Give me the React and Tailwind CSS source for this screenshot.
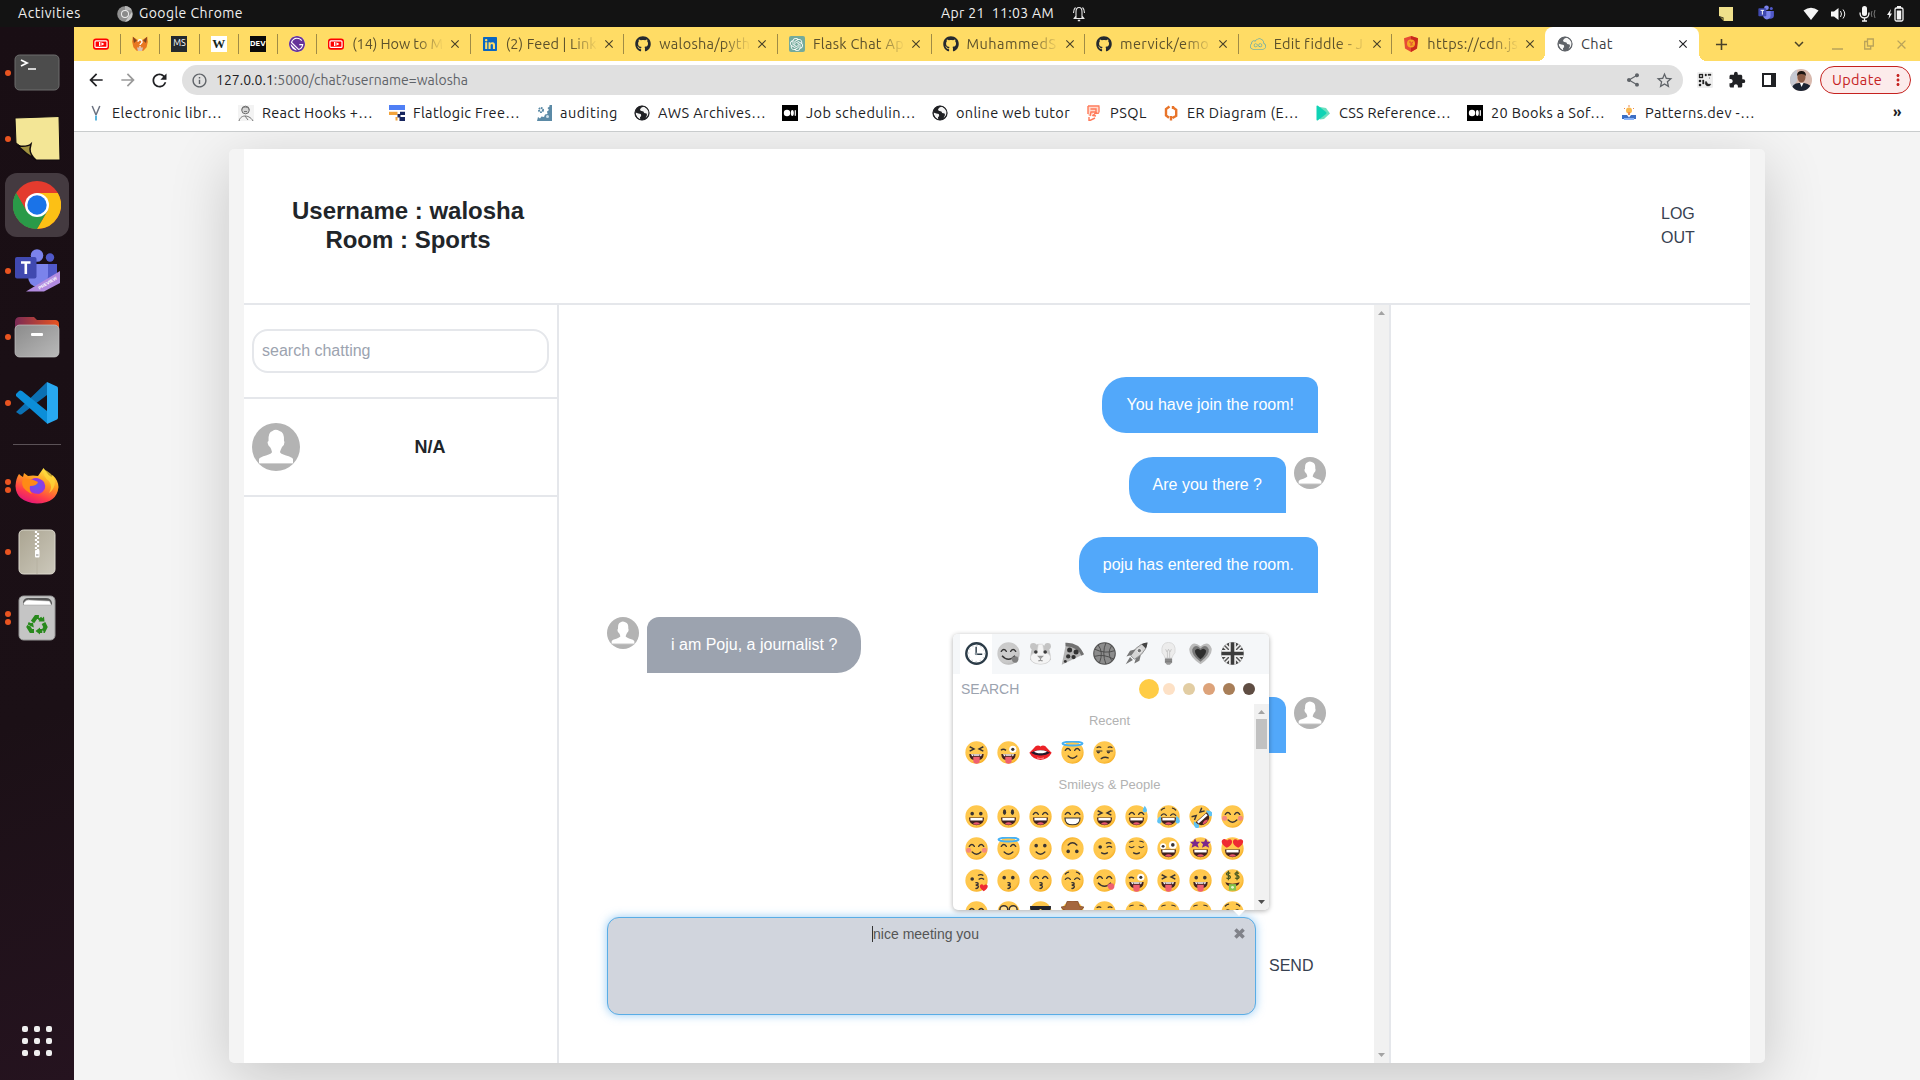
import React, { useLayoutEffect, useRef } from "react";
import { FaGithub, FaLinkedin } from "react-icons/fa";
import { SiOpenai, SiGatsby, SiJsfiddle } from "react-icons/si";
import {
  MdArrowBack, MdArrowForward, MdRefresh, MdInfoOutline, MdShare, MdStarOutline, MdExtension,
  MdClose, MdAdd, MdExpandMore, MdMoreVert,
} from "react-icons/md";

/* Single line of text spaced out to fill a given width. */
function Fit({ w, className = "", children }) {
  const outer = useRef(null);
  useLayoutEffect(() => {
    const el = outer.current.firstChild;
    el.style.letterSpacing = "0px";
    const natural = el.getBoundingClientRect().width;
    const n = el.textContent.length;
    el.style.letterSpacing = (w - natural) / n + "px";
  }, [w, children]);
  return (
    <span ref={outer} className={"block shrink-0 whitespace-pre " + className} style={{ width: w }}>
      <span className="inline-block">{children}</span>
    </span>
  );
}

/* ---------- small icons ---------- */

const Globe = ({ color = "#202124", size = 16 }) => (
  <svg width={size} height={size} viewBox="0 0 16 16">
    <circle cx="8" cy="8" r="7.2" fill={color} />
    <path d="M10 1.600 7.500 2.600 6 4.200 6.600 5.800l2.800.6.8 1.600 2.400.4.4 1.600-1.400 3.200 2.400-2.200 1.200-3-.4-3L13 3.600z" fill="#fff" opacity=".95" />
    <path d="M1.400 7.400 4.400 8.600l2.400.4.400 2-1.200 1.200.200 2.200-2.600-1.600-1.600-2.800z" fill="#fff" opacity=".95" />
    <circle cx="8" cy="8" r="7" fill="none" stroke={color} strokeWidth="1.200" />
  </svg>
);

const YouTube = () => (
  <svg width="16" height="16" viewBox="0 0 16 16">
    <rect x="0" y="2.400" width="16" height="11.400" rx="3" fill="#f00" />
    <rect x="2" y="4.800" width="12" height="6.600" rx="1" fill="none" stroke="#fff" strokeWidth="1.200" />
    <path d="M6 6h1.400v4H6zM8.400 6.200l3 1.800-3 1.800z" fill="#fff" />
  </svg>
);

const Fox = () => (
  <svg width="16" height="16" viewBox="0 0 16 16">
    <path d="M.8.8l5.400 3.400h3.600L15.200.8l.6 5-1.200 5.400-3.200 3.600H4.600l-3.200-3.600L.2 5.800z" fill="#e87722" />
    <path d="M.8.8l4 3.800L2 7zM15.200.8l-4 3.800L14 7z" fill="#7d4520" />
    <path d="M5 11.500h6L10 15H6z" fill="#d7c1b3" />
    <path d="M6 5.800a2 2 0 1 1 3 1.700c-.7.4-.9.800-.9 1.600M8 10.200v1.400" fill="none" stroke="#fff" strokeWidth="1.400" />
  </svg>
);

const LetterTile = ({ text, cls }) => (
  <span className={"flex h-4 w-4 items-center justify-center overflow-hidden " + cls}>{text}</span>
);

const Shield = () => (
  <svg width="16" height="16" viewBox="0 0 16 16">
    <path d="M8 0l7 2.300-1 10.200L8 16l-6-3.500L1 2.300z" fill="#e64b35" />
    <path d="M8 0l7 2.300-1 10.200L8 16z" fill="#c9291c" />
    <circle cx="8" cy="7.600" r="4" fill="#f5a623" />
    <path d="M6 6h2v4M10 5.500 8.500 8 10 9.500" fill="none" stroke="#e64b35" />
  </svg>
);

const MediumTile = () => (
  <svg width="16" height="16" viewBox="0 0 16 16">
    <rect width="16" height="16" fill="#000" />
    <circle cx="5" cy="8" r="3.200" fill="#fff" />
    <ellipse cx="10.300" cy="8" rx="1.500" ry="3" fill="#fff" />
    <rect x="12.700" y="5.200" width="1.200" height="5.600" fill="#fff" />
  </svg>
);

const BookmarkIcon = ({ kind }) => {
  if (kind === "globe") return <Globe />;
  if (kind === "medium") return <MediumTile />;
  return (
    <svg width="16" height="16" viewBox="0 0 16 16">
      {kind === "y" && (
        <>
          <path d="M4.200 1 8 10M11.800 1 8 10" fill="none" stroke="#6b7280" strokeWidth="1.500" />
          <path d="M8 10.500v5" stroke="#5ab4dc" strokeWidth="2" />
        </>
      )}
      {kind === "man" && (
        <>
          <rect width="16" height="16" fill="#f3f3f3" />
          <circle cx="7.500" cy="5" r="3.800" fill="#d5d5d5" stroke="#6d6d6d" />
          <path d="M4 4.500C4 1.500 11 1 11 4.800M6 6.500h3M1 16c1-4 4-5 6-5s6 1 8 5M7 11l3 4" fill="none" stroke="#777" />
        </>
      )}
      {kind === "flat" && (
        <>
          <path d="M0 0h16v5H0z" fill="#4f7ff5" />
          <path d="M0 6.800h8.500v3.200H0zM6.500 12h2v3.500h-2z" fill="#f2a33a" />
          <path d="M11 6.800h5v3.200h-5zM8.500 9h3v3H16v4h-5.500v-3.500h-2z" fill="#17255f" />
        </>
      )}
      {kind === "gear" && (
        <>
          <path d="M16 0v16H1l1-4 2 1.500 1.500-2 2.500.5 1-2.500 2.500-.5-.5-2.500 2-1.500-1.500-2 2-1.500V0z" fill="#5b8aa6" />
          <circle cx="5" cy="5" r="2" fill="none" stroke="#5b8aa6" strokeWidth="2" strokeDasharray="1.500 .6" />
          <circle cx="11.500" cy="11.500" r="1.500" fill="#cfe0ea" />
        </>
      )}
      {kind === "psql" && (
        <>
          <path d="M2 1.500h10.500v6H7v3H2z" fill="#ffd9cd" />
          <path d="M2 1h11.500M13 1.500v6M13 8 9 8.500l-2 2 3 .5M4.500 4h5.500v3H5l-1 4M2 1v8M3 12v4l6-3" fill="none" stroke="#ff7a59" strokeWidth="1.400" />
        </>
      )}
      {kind === "er" && (
        <path d="M6.500 1.500 3 4v6.500l3 2.200M10 2.500 13.200 4.800v6L9.500 13M8 11v4.500M10 1v3" fill="none" stroke="#e8742a" strokeWidth="2.400" />
      )}
      {kind === "css" && (
        <>
          <path d="M5 2v12.500l4-.5 6-5.500L11 3z" fill="#3ad6a9" opacity=".75" />
          <path d="M1.500 1.500q0-1.500 1.500-.7l8 6.200q1.200 1 0 2l-8 6.200q-1.500.8-1.500-.7z" fill="#0fd3b5" />
        </>
      )}
      {kind === "lamp" && (
        <>
          <circle cx="8" cy="5.500" r="3" fill="#f8b84e" />
          <path d="M8 0v2M3 3l1 1M13 3l-1 1" stroke="#ef8b4a" />
          <path d="M7 7h2v3H7z" fill="#ef8b4a" />
          <path d="M1 10l5 0 2 2.500 2-2.500 5 0v4H1z" fill="#3c6fc4" />
          <path d="M3 14h10" stroke="#8ab4f8" strokeWidth="2" />
        </>
      )}
    </svg>
  );
};

/* ---------- dock icons ---------- */

const ChromeLogo = ({ size }) => (
  <svg width={size} height={size} viewBox="0 0 48 48">
    <circle cx="24" cy="24" r="24" fill="#e33b2e" />
    <path d="M24 12H44.800A24 24 0 0 1 24 48L34.400 30z" fill="#fcc015" />
    <path d="M24 48A24 24 0 0 1 3.200 12L13.600 30 24 36 34.400 30z" fill="#2a9a48" />
    <path d="M3.200 12h41.600H24L13.600 30z" fill="#e33b2e" />
    <path d="M3.200 12 13.600 30l4 4L24 36 24 48A24 24 0 0 1 3.200 12z" fill="#2a9a48" />
    <circle cx="24" cy="24" r="12" fill="#fff" />
    <circle cx="24" cy="24" r="9.700" fill="#1a73e8" />
  </svg>
);

const Terminal = () => (
  <svg width="46" height="38" viewBox="0 0 46 38">
    <rect x="1" y="1" width="44" height="35" rx="4.500" fill="#4c4c4c" stroke="#6d6d6d" />
    <path d="M7 6l6 3-6 3" fill="none" stroke="#fff" strokeWidth="1.800" />
    <path d="M14 15h8" stroke="#fff" strokeWidth="1.500" />
  </svg>
);

const StickyNote = ({ size = 48 }) => (
  <svg width={size} height={size} viewBox="0 0 48 48">
    <path d="M2 3 46 1.500 47 45H23Q14 38 10 33L3 28z" fill="#f3e696" stroke="#110b0e" />
    <path d="M5 31q10 1 13-2l-1 5q0 6 6 11-10-6-18-14z" fill="#a1923f" stroke="#110b0e" strokeWidth="1.500" />
  </svg>
);

const Teams = ({ size = 46, preview }) => (
  <svg width={size} height={size} viewBox="0 0 46 46">
    <circle cx="23" cy="7.500" r="6.300" fill="#7b83eb" />
    <circle cx="36" cy="9.500" r="4.200" fill="#5059c9" />
    <path d="M30 16h13v12q0 9-8 9h-5z" fill="#5059c9" />
    <path d="M14 16h20v12q0 10-10 11-10-1-10-11z" fill="#7b83eb" />
    <rect x="1" y="9" width="21.500" height="21.500" rx="2" fill="#4049b0" />
    <path d="M7 14.500h9.500M11.800 14.500V26" stroke="#fff" strokeWidth="2.600" />
    {preview && (
      <>
        <path d="M12 43.500 46 23v12L30 43.500z" fill="#b18be0" />
        <text x="25.500" y="41.800" fontSize="4.500" fontWeight="700" fill="#fff" fontFamily="Liberation Sans, sans-serif" transform="rotate(-31 25.500 41.800)">PREVIEW</text>
      </>
    )}
  </svg>
);

const Folder = () => (
  <svg width="46" height="42" viewBox="0 0 46 42">
    <defs>
      <linearGradient id="fold" x1="0" x2="1"><stop offset="0" stopColor="#7a2a55" /><stop offset="1" stopColor="#e9541f" /></linearGradient>
      <linearGradient id="foldf" x1="0" x2="1" y2="1"><stop offset="0" stopColor="#8b8b8b" /><stop offset="1" stopColor="#b9b9b9" /></linearGradient>
    </defs>
    <path d="M1 6q0-5 5-5h14l3 3h18q4 0 4 4v14H1z" fill="url(#fold)" />
    <rect x="1" y="9" width="44" height="32" rx="4.500" fill="url(#foldf)" stroke="#c4c4c4" strokeWidth=".7" />
    <rect x="17" y="17" width="12" height="3" rx="1" fill="#fff" />
  </svg>
);

const VSCode = () => (
  <svg width="44" height="44" viewBox="0 0 44 44">
    <path d="M1 31 32 1v13L7 33q-2 1-3 0l-3-2z" fill="#0b70b3" />
    <path d="M1 13l3-3q1-1 3 0l25 20v12.500L1 15z" fill="#0c8ed8" />
    <path d="M32 1l10 4.500q1 .5 1 2v29q0 1.500-1 2L32 43z" fill="#28a8f0" />
  </svg>
);

const Firefox = () => (
  <svg width="44" height="36" viewBox="0 0 44 36">
    <defs>
      <linearGradient id="ffx" x1=".8" y1="0" x2=".3" y2="1">
        <stop offset="0" stopColor="#fff44f" /><stop offset=".4" stopColor="#ff9a1f" /><stop offset=".75" stopColor="#ff3b4b" /><stop offset="1" stopColor="#e0147c" />
      </linearGradient>
      <radialGradient id="ffp"><stop offset="0" stopColor="#5b5bf0" /><stop offset="1" stopColor="#9a35dd" /></radialGradient>
    </defs>
    <path d="M4 6q2 2 4 3l1-4 4 3q5-1 10 0L28.500 0l5 7 3 2 1-2Q43 12 43.500 19 42 35 22 35.500 1 34 0.500 18 1 10 4 6z" fill="url(#ffx)" />
    <path d="M13 14q8-8 16 0 4 8-5 12-10 0-11-7z" fill="url(#ffp)" />
    <path d="M8 11q8-1 15 3-1 4-8 4-1 4 2 8Q4 20 8 11z" fill="#ff8a16" />
    <path d="M28 1q0 8 6 12 4 6 0 12 6-4 6-12-2-8-12-12z" fill="#ffd83a" opacity=".75" />
  </svg>
);

const Archive = () => (
  <svg width="38" height="46" viewBox="0 0 38 46">
    <defs><linearGradient id="arc" x1="0" x2="1" y2="1"><stop offset="0" stopColor="#aba592" /><stop offset="1" stopColor="#ccc8bb" /></linearGradient></defs>
    <rect x="1" y="1" width="36" height="44" rx="4.500" fill="url(#arc)" stroke="#dcd9ce" />
    <path d="M19 2v43" stroke="#b7b2a2" />
    <path d="M18 2v20" stroke="#fff" strokeWidth="2.200" strokeDasharray="2 2" />
    <path d="M20 4v18" stroke="#fff" strokeWidth="2.200" strokeDasharray="2 2" />
    <rect x="17" y="21" width="4.500" height="7.500" rx="1" fill="#fff" />
    <path d="M18 26h2.500" stroke="#888" />
  </svg>
);

const Trash = () => (
  <svg width="38" height="46" viewBox="0 0 38 46">
    <rect x="1" y="1" width="36" height="44" rx="4.500" fill="#c5c5c5" stroke="#979797" />
    <path d="M5 10V7q1-4 5-4h18q5 0 6 5v2z" fill="#555" />
    <path d="M5.500 8q3-4 6-3l20 1 2 4h-28z" fill="#fff" stroke="#999" strokeWidth=".5" />
    <g fill="none" stroke="#28891c" strokeWidth="4">
      <path d="M14.500 27l3.500-5h3l2 3M25.500 28l2 4-2 4h-5M16 36h-3l-2.500-4 2-4" strokeDasharray="9 1.200" />
    </g>
    <path d="M20.500 26.500h6l-.5-5zM22 32.500v7l-4.500-3.500zM9.500 29.500l5.500-2 .8 5z" fill="#28891c" />
  </svg>
);

const DOCK = [
  { icon: <Terminal />, dots: 1 },
  { icon: <StickyNote />, dots: 1 },
  { icon: <ChromeLogo size={48} />, dots: 1, active: true },
  { icon: <Teams preview />, dots: 1 },
  { icon: <Folder />, dots: 1 },
  { icon: <VSCode />, dots: 1 },
  { sep: true },
  { icon: <Firefox />, dots: 2 },
  { icon: <Archive />, dots: 1 },
  { icon: <Trash />, dots: 2 },
];

function Dock() {
  return (
    <aside className="flex w-[74px] shrink-0 flex-col bg-[linear-gradient(160deg,#190e14_0%,#1b1016_65%,#25131f_100%)] pt-[13px]">
      {DOCK.map((d, i) =>
        d.sep ? (
          <div key={i} className="mx-auto my-2 h-px w-12 shrink-0 bg-[#5b5257]" />
        ) : (
          <div key={i} className="flex h-[66px] w-full shrink-0 items-center">
            <div className="flex w-[5px] flex-col gap-[2.500px] pl-[5px]">
              {Array.from({ length: d.dots }, (_, k) => (
                <span key={k} className="block h-1.5 w-1.5 rounded-full bg-[#e95420]" />
              ))}
            </div>
            <div className={"flex h-16 w-16 items-center justify-center rounded-xl " + (d.active ? "bg-[#443a40]" : "")}>{d.icon}</div>
          </div>
        )
      )}
      <div className="mx-auto mt-auto mb-[24px] grid grid-cols-3 gap-1.5">
        {Array.from({ length: 9 }, (_, k) => (
          <span key={k} className="block h-1.5 w-1.5 rounded-[2px] bg-[#efefef]" />
        ))}
      </div>
    </aside>
  );
}

/* ---------- system bar ---------- */

function SystemBar() {
  return (
    <header className="flex h-[27px] shrink-0 items-center bg-[#131313] text-[14px] text-[#f0f0f0]">
      <Fit w={63} className="ml-[18px]">Activities</Fit>
      <svg width="16" height="16" viewBox="0 0 16 16" className="mr-[6px] ml-[36px]">
        <circle cx="8" cy="8" r="7.800" fill="#8f8f8f" />
        <path d="M8 0v4l7 .5A8 8 0 0 0 8 0z" fill="#b5b5b5" />
        <path d="M8 16l4-6 3-4a8 8 0 0 1-7 10z" fill="#c6c6c6" />
        <circle cx="8" cy="8" r="4" fill="#eee" />
        <circle cx="8" cy="8" r="3" fill="#8a8a8a" />
      </svg>
      <Fit w={104}>Google Chrome</Fit>
      <Fit w={113} className="ml-[698px]">{"Apr 21  11:03 AM"}</Fit>
      <svg width="14" height="16" viewBox="0 0 14 16" className="ml-[18px]" fill="none" stroke="#e8e8e8" strokeWidth="1.100">
        <path d="M4 12V6q0-4.500 3-4.500T10 6v6M1.500 12.500h11M1.500 7q0-4 2-5.500M12.500 7q0-4-2-5.500M10 10l2 2.500M4 10l-2 2.500" />
        <path d="M5.800 14.500h2.400" strokeWidth="1.500" />
      </svg>
      <div className="ml-[633px] flex items-center">
        <svg width="14" height="14" viewBox="0 0 14 14"><path d="M0 0h14v14H4.500v-3.500L0 9z" fill="#efe08b" /><path d="M1 10l3.500 1v3z" fill="#8f843f" /></svg>
        <span className="ml-[25px]"><Teams size={17} /></span>
        <svg width="16" height="14" viewBox="0 0 16 14" className="ml-[28px]"><path d="M8 13 .5 3.500Q8-2 15.500 3.500z" fill="#f5f5f5" /></svg>
        <svg width="16" height="14" viewBox="0 0 16 14" className="ml-[12px]"><path d="M0 4.500h3L7.500 1v12L3 9.500H0z" fill="#f5f5f5" /><path d="M9.500 4q2 3 0 6M12 2.500q3.500 4.500 0 9" fill="none" stroke="#f5f5f5" /></svg>
        <svg width="18" height="16" viewBox="0 0 18 16" className="ml-[12px]"><rect x="3" y="0" width="5" height="10" rx="2.500" fill="#f5f5f5" /><path d="M1 6.500Q1 12 5.500 12T10 6.500M5.500 12v3M3 15h5" fill="none" stroke="#f5f5f5" strokeWidth="1.300" /><path d="M13 5q-1.500 3 0 6M16 4q-2 4 0 8" fill="none" stroke="#777" /></svg>
        <svg width="17" height="16" viewBox="0 0 17 16" className="ml-[10px]"><path d="M4 3 0 9h2.200L1.500 13 5 7.500H3z" fill="#f5f5f5" /><rect x="8" y="2" width="8" height="13" rx="1.500" fill="none" stroke="#f5f5f5" strokeWidth="1.300" /><path d="M10 0h4v2h-4zM9.800 4.500h4.400v9H9.800z" fill="#f5f5f5" /></svg>
      </div>
    </header>
  );
}

/* ---------- browser chrome ---------- */

const PINNED = [
  <YouTube />,
  <Fox />,
  <LetterTile text="MS" cls="bg-[#24292e] text-[9px] text-white" />,
  <LetterTile text="W" cls="bg-white font-['Liberation_Serif',serif] text-[13px] font-bold text-[#16261c]" />,
  <LetterTile text="DEV" cls="bg-[#0a0a0a] text-[7.500px] font-black text-white" />,
  <span className="flex h-4 w-4 items-center justify-center rounded-full bg-white"><SiGatsby size={16} color="#663399" /></span>,
];

const TABS = [
  { icon: <YouTube />, t: "(14) How to M", w: 91 },
  { icon: <FaLinkedin size={16} color="#0a66c2" />, t: "(2) Feed | Link", w: 91 },
  { icon: <FaGithub size={16} color="#24292f" />, t: "walosha/pyth", w: 91 },
  { icon: <span className="flex h-4 w-4 items-center justify-center rounded-[2px] bg-[#74aa9c]"><SiOpenai size={13} color="#fff" /></span>, t: "Flask Chat Ap", w: 91 },
  { icon: <FaGithub size={16} color="#24292f" />, t: "MuhammedS", w: 90 },
  { icon: <FaGithub size={16} color="#24292f" />, t: "mervick/emo", w: 89 },
  { icon: <SiJsfiddle size={16} color="#3a9cc0" />, t: "Edit fiddle - J", w: 89 },
  { icon: <Shield />, t: "https://cdn.js", w: 91 },
];

function TabStrip() {
  return (
    <div className="flex h-[34px] shrink-0 items-center bg-[#ffdc65] pl-2 text-[14.500px] text-[#5c512c]">
      {PINNED.map((icon, i) => (
        <div key={i} className="flex h-5 w-[39.200px] shrink-0 items-center justify-center border-r border-[#a08b45]">{icon}</div>
      ))}
      {TABS.map((tab, i) => (
        <div key={i} className={"flex h-5 w-[153.600px] shrink-0 items-center pl-[11px] " + (i < 7 ? "border-r border-[#a08b45]" : "")}>
          {tab.icon}
          <div className="ml-2 w-[92px] overflow-hidden [mask-image:linear-gradient(90deg,#000_70%,transparent_100%)]">
            <Fit w={tab.w}>{tab.t}</Fit>
          </div>
          <MdClose size={14} className="ml-[4px]" color="#4a4228" />
        </div>
      ))}
      <div className="relative -ml-px flex h-full w-[154px] shrink-0 items-center rounded-t-lg bg-white text-[#3c4043]">
        <span className="absolute bottom-0 -left-2 h-2 w-2 bg-[radial-gradient(circle_at_0_0,transparent_8px,#fff_8px)]" />
        <span className="absolute -right-2 bottom-0 h-2 w-2 bg-[radial-gradient(circle_at_100%_0,transparent_8px,#fff_8px)]" />
        <span className="ml-[12px]"><Globe color="#5f6368" /></span>
        <Fit w={32} className="ml-2">Chat</Fit>
        <MdClose size={14} className="ml-[63px]" color="#202124" />
      </div>
      <MdAdd size={19} className="ml-[13px]" color="#4a4228" />
      <MdExpandMore size={18} className="ml-[59px]" color="#4a4228" />
      <svg width="11" height="12" viewBox="0 0 11 12" className="ml-[24px]"><path d="M0 11h11" stroke="#b9a35a" strokeWidth="1.500" /></svg>
      <svg width="10" height="12" viewBox="0 0 10 12" className="ml-[21px]" fill="none" stroke="#b9a35a" strokeWidth="1.300"><path d="M3.500 1H9.300v7H3.500zM3.500 3.500H.7V11h6V8" /></svg>
      <MdClose size={15} className="ml-[20px]" color="#b9a35a" />
    </div>
  );
}

function Toolbar() {
  return (
    <div className="flex h-[38px] shrink-0 items-center bg-white pl-[12px]">
      <MdArrowBack size={20} color="#202124" />
      <MdArrowForward size={20} className="ml-3" color="#9a9a9a" />
      <MdRefresh size={21} className="ml-[11px]" color="#202124" />
      <div className="ml-[12px] flex h-[30px] w-[1501px] items-center rounded-full bg-[#e0e0e0] pl-[9px] text-[14px]">
        <MdInfoOutline size={17} color="#5f6368" />
        <Fit w={252} className="ml-[8px] text-[#5f6368]"><span className="text-[#202124]">127.0.0.1</span>:5000/chat?username=walosha</Fit>
        <MdShare size={16} className="ml-[1157px]" color="#5f6368" />
        <MdStarOutline size={19} className="ml-[14px]" color="#5f6368" />
      </div>
      <svg width="16" height="16" viewBox="0 0 16 16" className="ml-[14px]">
        <rect width="16" height="16" rx="1.500" fill="#eee" />
        <path d="M2 2h4v4H2zM8 2h1.500v2H8zM11 2h3v1.500h-3zM12.500 5v2M2 8h2v2H2zM5.500 8H7v4H5.500zM2 12h2v2H2zM9 9a3 3 0 1 0 5 3h-3z" fill="#222" stroke="#222" strokeWidth=".3" />
        <path d="M3.200 3.200h1.600v1.600H3.200z" fill="#fff" />
      </svg>
      <MdExtension size={18} className="ml-[15px]" color="#202124" />
      <svg width="14" height="14" viewBox="0 0 14 14" className="ml-[16px]"><rect x="1" y="1" width="12" height="12" fill="#fff" stroke="#202124" strokeWidth="2" /><path d="M9 1h4v12H9z" fill="#202124" /></svg>
      <svg width="22" height="22" viewBox="0 0 22 22" className="ml-[14px]">
        <clipPath id="pf"><circle cx="11" cy="11" r="11" /></clipPath>
        <g clipPath="url(#pf)">
          <rect width="22" height="22" fill="#d8b9ae" />
          <path d="M0 22V0h7v12z" fill="#c6c9d3" />
          <path d="M1 22q1-8 8-8h5q8 1 8 8z" fill="#1c2433" />
          <ellipse cx="11.500" cy="8" rx="4" ry="5.500" fill="#8a5a44" />
          <path d="M7 7q0-5 4.500-5T16 7q-1-2-4.500-2T7 7z" fill="#1d1512" />
          <path d="M10 14l1.500 4 2-4z" fill="#fff" />
        </g>
      </svg>
      <div className="ml-[8px] flex h-[28px] w-[91px] items-center rounded-full border border-[#c5221f] bg-[#fcebeb] pl-[11px] text-[14.500px] text-[#c5221f]">
        <Fit w={50}>Update</Fit>
        <MdMoreVert size={18} className="ml-[7px]" />
      </div>
    </div>
  );
}

const BOOKMARKS = [
  ["y", "Electronic libr…", 110], ["man", "React Hooks +…", 111], ["flat", "Flatlogic Free…", 107],
  ["gear", "auditing", 58], ["globe", "AWS Archives…", 108], ["medium", "Job schedulin…", 110],
  ["globe", "online web tutor", 114], ["psql", "PSQL", 37], ["er", "ER Diagram (E…", 112],
  ["css", "CSS Reference…", 112], ["medium", "20 Books a Sof…", 114], ["lamp", "Patterns.dev -…", 110],
];

function Bookmarks() {
  return (
    <div className="flex h-[33px] shrink-0 items-center border-b border-[#c9cccd] bg-white pb-[5px] pl-[14px] text-[14.500px] text-[#202124]">
      {BOOKMARKS.map(([kind, t, w], i) => (
        <div key={i} className="mr-[16px] flex shrink-0 items-center gap-2">
          <BookmarkIcon kind={kind} />
          <Fit w={w}>{t}</Fit>
        </div>
      ))}
      <span className="ml-[122px] text-[15px] font-bold">»</span>
    </div>
  );
}

/* ---------- emoji drawings ---------- */

const INK = "#3a3432";

const EYES = {
  dot: <g fill={INK}><circle cx="20" cy="24" r="5" /><circle cx="44" cy="24" r="5" /></g>,
  tall: <g fill={INK}><ellipse cx="21" cy="20" rx="4.500" ry="8" /><ellipse cx="43" cy="20" rx="4.500" ry="8" /></g>,
  arc: <path d="M12 26q7-10 14 0M38 26q7-10 14 0" fill="none" stroke={INK} strokeWidth="4" strokeLinecap="round" />,
  browarc: <path d="M12 29q7-9 14 0M38 29q7-9 14 0M12 14q4-4 9-5M52 14q-4-4-9-5" fill="none" stroke={INK} strokeWidth="3.500" strokeLinecap="round" />,
  squint: <path d="M13 16l12 6-12 6M51 16l-12 6 12 6" fill="none" stroke={INK} strokeWidth="4" />,
  wink: <><circle cx="20" cy="28" r="5" fill={INK} /><path d="M38 29q8-6 15 0M36 18q8-5 15 0" fill="none" stroke={INK} strokeWidth="3.500" /></>,
  zany: <><path d="M11 26q6-6 14 0" fill="none" stroke={INK} strokeWidth="4" /><circle cx="44" cy="23" r="10" fill="#fff" /><circle cx="44" cy="23" r="4.500" fill={INK} /></>,
  crazy: <><circle cx="17" cy="26" r="8.500" fill="#fff" /><circle cx="17" cy="26" r="4" fill={INK} /><circle cx="44" cy="22" r="11" fill="#fff" /><circle cx="44" cy="22" r="5" fill={INK} /></>,
  closed: <path d="M11 26q7 7 15 0M38 26q7 7 15 0M12 15q6-4 12-3M52 15q-6-4-12-3" fill="none" stroke={INK} strokeWidth="3" />,
  side: (
    <>
      <path d="M9 28h17M38 28h17M10 19q6-5 13-1M54 19q-6-5-13-1" fill="none" stroke={INK} strokeWidth="3" />
      <path d="M10 29h10q-1 6-5 6t-5-6zM38 29h10q-1 6-5 6t-5-6z" fill={INK} />
    </>
  ),
  star: <path d="M17 4l4 9h10l-7 7 3 10-10-5-10 5 3-10-8-7h10zM47 4l4 9h10l-8 7 3 10-10-5-10 5 3-10-7-7h10z" fill="#7b2a8c" />,
  heart: <path d="M16 30Q-2 18 3 9q7-8 14 1Q25 2 30 10q4 10-14 20zM48 30Q30 20 34 10q5-8 13 0 8-8 14 0 3 10-13 20z" fill="#ef2b33" />,
  money: <g fill="none" stroke="#4b5a22" strokeWidth="3.500"><path d="M26 12q-9-4-11 1 0 4 6 5 6 2 5 6-3 5-11 1M20.500 5v26M50 12q-9-4-11 1 0 4 6 5 6 2 5 6-3 5-11 1M44.500 5v26" /></g>,
  glasses: <g fill="#fff" fillOpacity=".4" stroke={INK} strokeWidth="4"><circle cx="19" cy="24" r="11" /><circle cx="45" cy="24" r="11" /></g>,
  shades: <path d="M3 14h58v6q-3 14-16 12-8-1-11-10h-4q-3 9-11 10Q6 34 3 20z" fill="#23232b" />,
};

const MOUTHS = {
  grin: (
    <>
      <path d="M11 35h42q0 21-21 21T11 35z" fill="#41211f" />
      <path d="M15 36h34v7H15z" fill="#fff" />
      <path d="M22 52q10-8 20 0-10 6-20 0z" fill="#e8546b" />
    </>
  ),
  tongue: (
    <>
      <path d="M12 36h40q0 18-20 18T12 36z" fill="#41211f" />
      <path d="M16 37h8l-3 6zM40 37h8l-4 6zM24 37h16v4H24z" fill="#fff" />
      <path d="M23 44h18v10q0 9-9 9t-9-9z" fill="#f0606f" />
    </>
  ),
  teeth: <path d="M11 36h42q0 19-21 19T11 36z" fill="#fff" stroke={INK} strokeWidth="3" />,
  smile: <path d="M20 42q12 12 24 0" fill="none" stroke={INK} strokeWidth="4" strokeLinecap="round" />,
  small: <path d="M24 44q8 5 16 0" fill="none" stroke={INK} strokeWidth="4" strokeLinecap="round" />,
  flat: <path d="M23 49q9-6 19-2" fill="none" stroke={INK} strokeWidth="4" strokeLinecap="round" />,
  kiss: <path d="M29 38q9-1 7 5l-6 2q8 0 7 5-2 5-8 4" fill="none" stroke={INK} strokeWidth="4" />,
  frown: <path d="M22 50q10-10 20 0" fill="none" stroke={INK} strokeWidth="4" />,
  yum: <><path d="M14 38q18 20 36 0" fill="none" stroke={INK} strokeWidth="4" /><path d="M40 45q6-8 17-4 6 10-2 16-12 4-15-12z" fill="#f0606f" /></>,
  money: <><path d="M12 37q20 8 40 0-4 12-20 12T12 37z" fill="#41211f" /><path d="M22 42h20v18H22z" fill="#85c44c" /><circle cx="32" cy="51" r="4" fill="#e7f4cf" /></>,
};

const EXTRAS = {
  sweat: <path d="M55 2q9 12 5 17-7 5-11-2 0-6 6-15z" fill="#5ec3f5" />,
  halo: <ellipse cx="32" cy="7" rx="28" ry="5.500" fill="none" stroke="#45b1f5" strokeWidth="5" />,
  tears: <path d="M10 30q-12 8-9 18 6 8 12-1zM54 30q12 8 9 18-6 8-12-1z" fill="#5ec3f5" />,
  blush: <g fill="#f58a7d"><circle cx="10" cy="37" r="7" /><circle cx="54" cy="37" r="7" /></g>,
  heart: <path d="M52 62Q38 52 42 45q5-5 10 1 6-6 11 0 2 8-11 16z" fill="#ef2b33" />,
  hat: <path d="M0 17Q8 14 12 16L17 1q15-4 30 0l5 15q4-2 12 1-6 12-32 12T0 17z" fill="#a5673f" stroke="#7a4524" strokeWidth="2" />,
};

function Face({ eyes = "dot", mouth = "grin", extra, flip, tilt }) {
  const onTop = extra === "heart" || extra === "hat";
  return (
    <svg width="23" height="23" viewBox="0 0 64 64">
      <defs>
        <radialGradient id="skin" cx=".42" cy=".4" r=".62">
          <stop offset="0" stopColor="#ffcb50" /><stop offset=".8" stopColor="#ffc64c" /><stop offset="1" stopColor="#f7b229" />
        </radialGradient>
      </defs>
      <g transform={flip ? "rotate(180 32 32)" : tilt ? "rotate(-42 32 32)" : undefined}>
        <circle cx="32" cy="32" r="31" fill="url(#skin)" />
        {extra && !onTop && EXTRAS[extra]}
        {EYES[eyes]}
        {MOUTHS[mouth]}
        {onTop && EXTRAS[extra]}
      </g>
    </svg>
  );
}

const Lips = () => (
  <svg width="23" height="23" viewBox="0 0 64 64">
    <path d="M1 33q10-10 18-19 7-4 13 1 6-5 13-1 8 9 18 19-10 19-31 20Q11 52 1 33z" fill="#ec2227" />
    <path d="M5 33q13-9 27-7 14-2 27 7-13 8-27 7-14 1-27-7z" fill="#23182a" />
    <path d="M14 29q18-6 36 0-4 5-18 5t-18-5z" fill="#fff" />
    <path d="M22 47q10 3 20 0" stroke="#ff7377" strokeWidth="3" fill="none" />
  </svg>
);

const RECENT = [
  { eyes: "squint", mouth: "tongue" },
  { eyes: "zany", mouth: "tongue" },
  "lips",
  { eyes: "arc", mouth: "smile", extra: "halo" },
  { eyes: "side", mouth: "flat" },
];

const PEOPLE = [
  {}, { eyes: "tall" }, { eyes: "arc" }, { eyes: "arc", mouth: "teeth" }, { eyes: "squint" },
  { eyes: "arc", extra: "sweat" }, { eyes: "browarc", extra: "tears" }, { eyes: "squint", extra: "tears", tilt: true }, { eyes: "arc", mouth: "smile", extra: "blush" },
  { eyes: "arc", mouth: "smile", extra: "blush" }, { eyes: "arc", mouth: "smile", extra: "halo" }, { mouth: "smile" }, { mouth: "smile", flip: true },
  { eyes: "wink", mouth: "small" }, { eyes: "closed", mouth: "small" }, { eyes: "crazy" }, { eyes: "star" }, { eyes: "heart" },
  { eyes: "wink", mouth: "kiss", extra: "heart" }, { mouth: "kiss" }, { eyes: "arc", mouth: "kiss" }, { eyes: "browarc", mouth: "kiss" },
  { eyes: "arc", mouth: "yum" }, { eyes: "zany", mouth: "tongue" }, { eyes: "squint", mouth: "tongue" }, { mouth: "tongue" }, { eyes: "money", mouth: "money" },
  { eyes: "arc", mouth: "smile", extra: "blush" }, { eyes: "glasses" }, { eyes: "shades" }, { extra: "hat" }, { eyes: "side", mouth: "flat" },
  { eyes: "closed" }, { eyes: "closed", mouth: "frown" }, { eyes: "closed", mouth: "frown" }, { eyes: "browarc", mouth: "frown" },
];

const CATEGORY_ICONS = [
  <svg width="23" height="23" viewBox="0 0 64 64">
    <circle cx="32" cy="32" r="28.500" fill="#fff" stroke="#2b3b47" strokeWidth="6.500" />
    <circle cx="32" cy="32" r="22" fill="none" stroke="#7c8a94" strokeWidth="2.500" strokeDasharray="2 9.500" />
    <path d="M31 13v21h17" fill="none" stroke="#2b3b47" strokeWidth="4" />
    <circle cx="31" cy="33" r="4" fill="#8c979f" />
  </svg>,
  <Face eyes="arc" mouth="yum" />,
  <svg width="23" height="23" viewBox="0 0 64 64">
    <g fill="#c4c4c4"><circle cx="12" cy="12" r="9" /><circle cx="52" cy="12" r="9" /><path d="M8 18Q18 4 32 6t24 12q4 14 5 30-6 14-29 14T3 48q1-18 5-30z" /></g>
    <path d="M26 6h12l4 24q14 0 18 12 0 18-28 20Q4 60 4 42q4-12 18-12z" fill="#f4f4f4" stroke="#d5d5d5" strokeWidth="1.500" />
    <g fill="#3c3c3c"><circle cx="19" cy="28" r="5" /><circle cx="45" cy="28" r="5" /></g>
    <path d="M26 40h12l-6 6zM32 46v5M26 53q6-4 12 0" fill="#aaa" stroke="#999" strokeWidth="3" />
  </svg>,
  <svg width="23" height="23" viewBox="0 0 64 64">
    <path d="M14 4Q50 4 63 34L2 63z" fill="#b5b5b5" />
    <path d="M12 2q38-2 52 32l-7 4Q46 14 13 12z" fill="#717171" />
    <g fill="#333"><circle cx="24" cy="22" r="7" /><circle cx="42" cy="28" r="7" /><circle cx="20" cy="40" r="6" /><circle cx="35" cy="42" r="6" /><circle cx="12" cy="54" r="4" /></g>
  </svg>,
  <svg width="23" height="23" viewBox="0 0 64 64">
    <circle cx="32" cy="32" r="30" fill="#8c8c8c" stroke="#555" strokeWidth="3" />
    <path d="M5 20q28 14 56 4M4 40q26-8 54 8M36 2q-12 28 0 60M14 8q16 20 4 50M52 10q-14 20 0 42" fill="none" stroke="#484848" strokeWidth="2.500" />
  </svg>,
  <svg width="23" height="23" viewBox="0 0 64 64">
    <path d="M62 2Q44 4 30 18L16 38l10 10 20-14Q60 20 62 2z" fill="#d5d5d5" stroke="#777" strokeWidth="2" />
    <path d="M62 2q-8 0-16 4l12 12q4-8 4-16z" fill="#444" />
    <path d="M30 20 14 24 4 40l14-4zM44 36l-4 16-14 8 4-14zM14 42 2 62l20-12z" fill="#777" />
    <circle cx="40" cy="24" r="6" fill="#777" stroke="#fff" strokeWidth="2" />
  </svg>,
  <svg width="23" height="23" viewBox="0 0 64 64">
    <path d="M22 44q-2-8-8-14Q10 2 32 1q22 1 18 29-6 6-8 14z" fill="#ececec" stroke="#d2d2d2" strokeWidth="2" />
    <path d="M24 20l4 8 4-8 4 8 4-8M29 28v16M35 28v16" fill="none" stroke="#bbb" strokeWidth="2" />
    <path d="M22 45h20v12l-6 6h-8l-6-6z" fill="#9a9a9a" /><path d="M22 50h20M22 55h20" stroke="#666" strokeWidth="2" />
  </svg>,
  <svg width="23" height="23" viewBox="0 0 64 64">
    <path d="M32 62Q-2 38 1 18 10-6 32 12 54-6 63 18 66 38 32 62z" fill="#bbb" />
    <path d="M32 55Q6 36 9 20q8-16 23-2 15-14 23 2 3 16-23 35z" fill="#777" />
    <path d="M32 48Q14 34 17 23q7-9 15 0 8-9 15 0 3 11-15 25z" fill="#2e2e2e" />
  </svg>,
  <svg width="23" height="23" viewBox="0 0 64 64">
    <clipPath id="uk"><circle cx="32" cy="32" r="31" /></clipPath>
    <g clipPath="url(#uk)">
      <rect width="64" height="64" fill="#4a4a4a" />
      <path d="M0 0l64 64M64 0 0 64" stroke="#f2f2f2" strokeWidth="13" /><path d="M0 0l64 64M64 0 0 64" stroke="#555" strokeWidth="4" />
      <path d="M32 0v64M0 32h64" stroke="#f2f2f2" strokeWidth="19" /><path d="M32 0v64M0 32h64" stroke="#3c3c3c" strokeWidth="10" />
    </g>
  </svg>,
];

const Triangle = ({ up, color }) => (
  <svg width="7" height="4" viewBox="0 0 7 4" className="mx-auto"><path d={up ? "M0 4 3.500 0 7 4z" : "M0 0h7L3.500 4z"} fill={color} /></svg>
);

function EmojiPicker() {
  return (
    <div className="absolute -right-[14px] bottom-[104px] z-10 flex h-[276px] w-[316px] flex-col rounded-[5px] bg-white text-left shadow-[0_1px_5px_rgba(0,0,0,0.32)]">
      <div className="flex h-10 shrink-0 rounded-t-[5px] bg-[#f5f7f9] pl-[7px]">
        {CATEGORY_ICONS.map((icon, i) => (
          <div key={i} className={"flex h-10 w-8 items-center justify-center pb-[2px] " + (i === 0 ? "bg-white" : "grayscale")}>{icon}</div>
        ))}
      </div>
      <div className="flex h-[30px] shrink-0 items-center pl-2">
        <span className="w-[178px] text-[14px] text-[#9ca3af]">SEARCH</span>
        <span className="mr-1 h-5 w-5 rounded-full bg-[#ffcc45]" />
        <div className="flex gap-2">
          <span className="h-3 w-3 rounded-full bg-[#fde1c6]" />
          <span className="h-3 w-3 rounded-full bg-[#e2cda3]" />
          <span className="h-3 w-3 rounded-full bg-[#dda37a]" />
          <span className="h-3 w-3 rounded-full bg-[#a87e58]" />
          <span className="h-3 w-3 rounded-full bg-[#5f4d43]" />
        </div>
      </div>
      <div className="flex min-h-0 flex-1 overflow-hidden rounded-b-[5px]">
        <div className="h-full w-[301px] overflow-hidden pl-[7px] text-center text-[13px] text-[#b2b2b2]">
          <div className="h-8 w-[299px] leading-[33px]">Recent</div>
          <div className="grid h-8 w-[288px] grid-cols-9">
            {RECENT.map((e, i) => (
              <div key={i} className="flex h-8 items-center justify-center">{e === "lips" ? <Lips /> : <Face {...e} />}</div>
            ))}
          </div>
          <div className="h-8 w-[299px] leading-[33px]">Smileys &amp; People</div>
          <div className="grid w-[288px] grid-cols-9">
            {PEOPLE.map((e, i) => (
              <div key={i} className="flex h-8 items-center justify-center"><Face {...e} /></div>
            ))}
          </div>
        </div>
        <div className="flex w-[15px] flex-col bg-[#f1f1f1] pt-[6px] pb-[6px]">
          <Triangle up color="#a3a3a3" />
          <div className="mx-auto mt-[5px] h-[30px] w-[11px] bg-[#c1c1c1]" />
          <div className="mt-auto"><Triangle color="#505050" /></div>
        </div>
      </div>
      <svg width="12" height="6" viewBox="0 0 12 6" className="absolute right-[24px] -bottom-[6px]"><path d="M0 0h12L6 6z" fill="#fff" /></svg>
    </div>
  );
}

/* ---------- chat page ---------- */

const Avatar = ({ size }) => (
  <svg width={size} height={size} viewBox="0 0 48 48" className="shrink-0">
    <circle cx="24" cy="24" r="24" fill="#b3b3b3" />
    <path d="M7 40v-4q1-2 7-3.500 6-2 6-3.500-.5-3-2-5-2-1-2.500-5l1-1q-.5-9 4-10 3-2.500 7 0 5 1 4.500 10l.5 1q0 3-2.500 5-1.500 3-2 5 0 1.500 6 3.500 6 1.500 7 3.500v4z" fill="#fff" />
    <path d="M7 40.500h34" stroke="#d0d0d0" />
  </svg>
);

const Sent = ({ children, avatar }) => (
  <div className={"flex justify-end gap-2 " + (avatar ? "" : "pr-2")}>
    <div className="flex h-14 min-w-[100px] items-center rounded-l-3xl rounded-tr-xl bg-[#52a8fa] px-6 text-base text-white">{children}</div>
    {avatar && <Avatar size={32} />}
  </div>
);

function ChatPage() {
  return (
    <div className="flex flex-1 justify-center overflow-hidden bg-[#f4f4f4] pt-[17px] font-['Liberation_Sans',Arial,sans-serif] text-[#212529]">
      <div className="flex h-[914px] w-[1536px] shrink-0 rounded-[5px] bg-[#f4f4f4] px-[15px] shadow-[0_15px_60px_rgba(0,0,0,0.19)]">
        <div className="flex flex-1 flex-col bg-white">
          <div className="flex h-[156px] shrink-0 items-center justify-between border-b-2 border-[#e5e7eb] px-12">
            <h2 className="text-center text-2xl leading-[28.800px] font-bold">Username : walosha<br />Room : Sports</h2>
            <div className="w-[41px] text-base leading-6 text-[#374151]">LOG OUT</div>
          </div>
          <div className="flex min-h-0 flex-1">
            <section className="w-[315px] shrink-0 border-r-2 border-[#e5e7eb]">
              <div className="border-b-2 border-[#e5e7eb] px-2 py-6">
                <div className="flex h-11 items-center rounded-2xl border-2 border-[#e5e7eb] px-2 pb-px text-base text-[#9ca3af]">search chatting</div>
              </div>
              <div className="flex items-center border-b-2 border-[#e5e7eb] px-2 py-6">
                <Avatar size={48} />
                <div className="flex-1 pb-px pl-[11px] text-center text-lg font-bold">N/A</div>
              </div>
            </section>
            <main className="flex flex-1 border-r-2 border-[#e5e7eb]">
              <div className="flex w-[815px] flex-col px-12 pt-[72px] pb-12">
                <div className="flex flex-col gap-6">
                  <Sent>You have join the room!</Sent>
                  <Sent avatar>Are you there ?</Sent>
                  <Sent>poju has entered the room.</Sent>
                  <div className="flex gap-2">
                    <Avatar size={32} />
                    <div className="flex h-14 items-center rounded-tl-xl rounded-r-3xl bg-[#9ca3af] px-6 text-base text-white">i am Poju, a journalist ?</div>
                  </div>
                  <Sent avatar />
                </div>
                <div className="mt-auto flex items-center">
                  <div className="relative h-[98px] w-[649px] rounded-xl border border-[#59ade6] bg-[#d1d5dd] pt-[6px] pr-3 text-center text-[14px] leading-[20px] text-[#555] shadow-[0_0_10px_rgba(82,168,236,0.6)]">
                    <span className="border-l border-[#333]">nice meeting you</span>
                    <svg width="11" height="11" viewBox="0 0 10 10" className="absolute top-[10px] right-[10px]"><path d="M1.300 1.300l7.400 7.400M8.700 1.300 1.300 8.700" stroke="#808289" strokeWidth="3.200" /></svg>
                    <EmojiPicker />
                  </div>
                  <span className="ml-[13px] pb-px text-base text-[#374151]">SEND</span>
                </div>
              </div>
              <div className="flex w-[15px] shrink-0 flex-col justify-between bg-[#f1f1f1] py-[6px]">
                <Triangle up color="#a3a3a3" />
                <Triangle color="#a3a3a3" />
              </div>
            </main>
            <section className="w-[359px] shrink-0" />
          </div>
        </div>
      </div>
    </div>
  );
}

export default function App() {
  return (
    <div className="flex h-[1080px] w-[1920px] flex-col overflow-hidden bg-white font-[Ubuntu,'Noto_Sans',sans-serif]">
      <SystemBar />
      <div className="flex min-h-0 flex-1">
        <Dock />
        <div className="flex min-w-0 flex-1 flex-col">
          <TabStrip />
          <Toolbar />
          <Bookmarks />
          <ChatPage />
        </div>
      </div>
    </div>
  );
}
